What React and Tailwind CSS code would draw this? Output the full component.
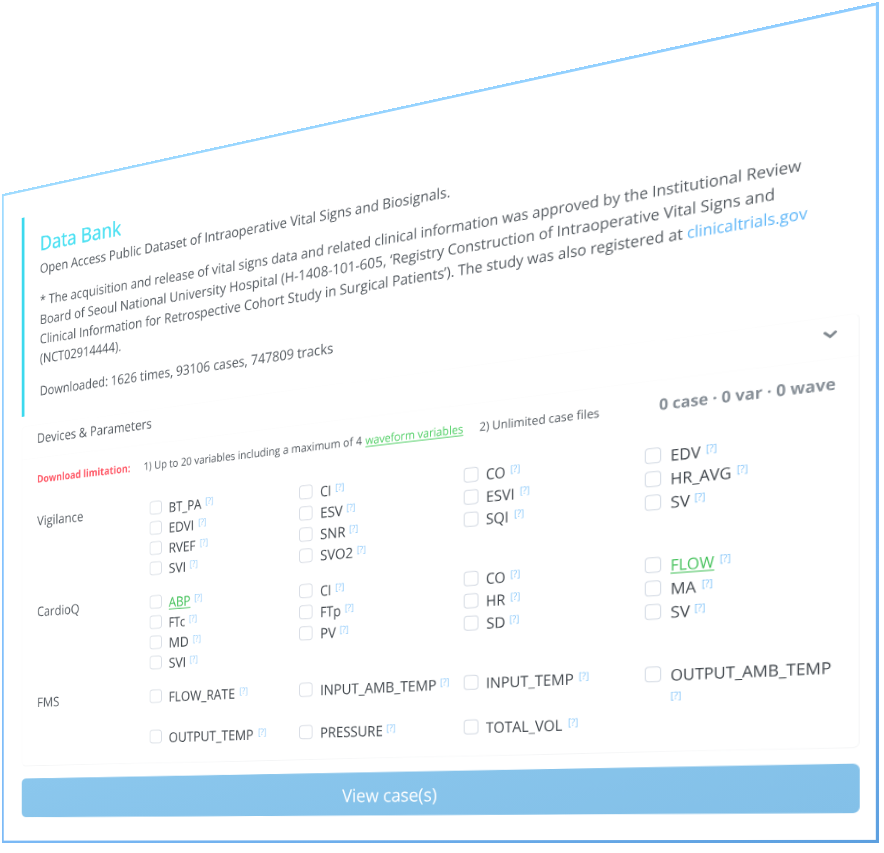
import { useLayoutEffect, useRef, useState } from "react";

// Text squeezed or stretched horizontally to a given width.
function Fit({ w, children, className = "", underline = false }) {
  const ref = useRef(null);
  const [scale, setScale] = useState(1);
  useLayoutEffect(() => {
    const measure = () => {
      if (ref.current) setScale(w / ref.current.offsetWidth);
    };
    measure();
    if (document.fonts) document.fonts.ready.then(measure);
  }, [w]);
  return (
    <span className={`inline-block whitespace-nowrap ${className}`} style={{ width: w }}>
      <span
        ref={ref}
        className={`inline-block origin-left ${underline ? "underline decoration-[1.3px] underline-offset-2" : ""}`}
        style={{ transform: `scaleX(${scale})` }}
      >
        {children}
      </span>
    </span>
  );
}

const groups = [
  {
    name: "Vigilance",
    w: 65,
    columns: [
      [["BT_PA", 42], ["EDVI", 33], ["RVEF", 35], ["SVI", 22.7]],
      [["CI", 13.6], ["ESV", 26.5], ["SNR", 30], ["SVO2", 38.7]],
      [["CO", 21.3], ["ESVI", 31], ["SQI", 24.5]],
      [["EDV", 28.8], ["HR_AVG", 58], ["SV", 18.5]],
    ],
  },
  {
    name: "CardioQ",
    w: 59,
    columns: [
      [["ABP", 28, true], ["FTc", 21.4], ["MD", 26], ["SVI", 22.7]],
      [["CI", 13.6], ["FTp", 24.5], ["PV", 18.5]],
      [["CO", 21.3], ["HR", 20.8], ["SD", 20]],
      [["FLOW", 42, true], ["MA", 25], ["SV", 18.5]],
    ],
  },
  {
    name: "FMS",
    w: 31,
    tall: true,
    columns: [
      [["FLOW_RATE", 84.8], ["OUTPUT_TEMP", 107.8]],
      [["INPUT_AMB_TEMP", 133], ["PRESSURE", 72.7]],
      [["INPUT_TEMP", 91.6], ["TOTAL_VOL", 80.4]],
      [["OUTPUT_AMB_TEMP", 149.5]],
    ],
  },
];

const boxTone = ["border-[#dadfe6]", "border-[#d7dce4]", "border-[#d3d9e2]", "border-[#d3dae4]"];
const hintTone = ["text-[#8fcafa]", "text-[#84c5fa]", "text-[#7cc2f9]", "text-[#79bff8]"];

function Option({ label, w, wave, tall, col }) {
  return (
    <div className={`flex ${tall ? "h-12" : "h-6"}`}>
      <span className={`mt-[2.5px] mr-[8.6px] size-4 shrink-0 rounded-[4px] border-[1.3px] bg-white ${boxTone[col]}`} />
      <div className="-mt-[0.5px] w-[160px] shrink-0 text-base leading-6 text-[#3f454b]">
        <Fit w={w} underline={wave} className={`mr-[4.8px] ${wave ? "text-[#40c057]" : ""}`}>
          {label}
        </Fit>
        <span className={`relative -top-[4.5px] inline-block align-baseline text-[10.5px] leading-none ${hintTone[col]}`}>
          <Fit w={10}>[?]</Fit>
        </span>
      </div>
    </div>
  );
}

export default function App() {
  return (
    <div className="h-[853px] w-[884px] overflow-hidden bg-white font-['Open_Sans','Noto_Sans',sans-serif]">
      <div className="h-[810.5px] w-[984px] origin-top-left bg-linear-[165deg,#a0dcff_0%,#84c3ff_40%,#7cbaf6_75%,#5c9fdf_100%] p-[3px] [transform:matrix3d(0.687535,-0.19603,0,-0.00023254,0,0.8,0,0,0,0,1,0,1.6,194.2,0,1)]">
        <div className="h-full bg-white">
          <div className="ml-[25.7px] flex w-[938px] origin-top-left flex-col pt-[32.2px] text-base leading-6 text-[#565c62] [transform:skewY(0.18deg)]">
            <section className="h-[246.5px] border-l-4 border-[#3bd9ee] pt-5 pl-[21.8px]">
              <h1 className="text-2xl leading-8 text-[#4be0f2] [-webkit-text-stroke:0.35px_#4be0f2]">
                <Fit w={112}>Data Bank</Fit>
              </h1>
              <div className="mt-[3px] h-6">
                <Fit w={511.5}>Open Access Public Dataset of Intraoperative Vital Signs and Biosignals.</Fit>
              </div>
              <div className="mt-[15px] h-6">
                <Fit w={860.5}>
                  * The acquisition and release of vital signs data and related clinical information was approved by the
                  Institutional Review
                </Fit>
              </div>
              <div className="h-6">
                <Fit w={836.5}>
                  Board of Seoul National University Hospital (H-1408-101-605, ‘Registry Construction of Intraoperative
                  Vital Signs and
                </Fit>
              </div>
              <div className="h-6">
                <Fit w={749.5}>
                  Clinical Information for Retrospective Cohort Study in Surgical Patients’). The study was also
                  registered at
                </Fit>
                <Fit w={112} className="ml-[5px] text-[#5eb6f8]">
                  clinicaltrials.gov
                </Fit>
              </div>
              <div className="h-6">
                <Fit w={112.5}>(NCT02914444).</Fit>
              </div>
              <div className="mt-4 h-6">
                <Fit w={378.5}>Downloaded: 1626 times, 93106 cases, 747809 tracks</Fit>
              </div>
            </section>

            <section className="mt-[12.5px] h-[422px] rounded-md border border-t-[#fdfdfd] border-r-[#f5f6f7] border-b-[#f4f5f6] border-l-[#fbfbfc]">
              <header className="flex h-[41px] items-start justify-between border-b border-[#fdfdfd] pt-[4px] pr-[19.5px] pl-[21px]">
                <Fit w={156.5}>Devices &amp; Parameters</Fit>
                <svg viewBox="0 0 12 8" className="mt-[8.5px] h-[8px] w-[12px]" fill="none" stroke="#7f878e" strokeWidth="2.5">
                  <path d="M1.3 1.6 6 5.8l4.7-4.2" strokeLinecap="round" />
                </svg>
              </header>
              <div className="flex h-6 items-baseline pt-[11.5px] pl-[21px] text-[12.8px]">
                <Fit w={128.7} className="mr-[17.5px] font-bold text-[#ff5b69]">
                  Download limitation:
                </Fit>
                <Fit w={269.5} className="mr-[4.5px]">
                  1) Up to 20 variables including a maximum of 4
                </Fit>
                <Fit w={109} underline className="mr-[17.5px] text-[#51cf66]">
                  waveform variables
                </Fit>
                <Fit w={125}>2) Unlimited case files</Fit>
                <Fit w={164} className="ml-[59.5px] text-base font-bold text-[#868e96]">
                  0 case · 0 var · 0 wave
                </Fit>
              </div>
              <div className="flex flex-col gap-4 pt-[41px] pl-[21px]">
                {groups.map((g) => (
                  <div key={g.name} className="flex h-24">
                    <div className="w-[154.4px] shrink-0">
                      <Fit w={g.w}>{g.name}</Fit>
                    </div>
                    {g.columns.map((col, i) => (
                      <div key={i} className="w-[187.7px] shrink-0">
                        {col.map(([label, w, wave]) => (
                          <Option key={label} label={label} w={w} wave={wave} tall={g.tall} col={i} />
                        ))}
                      </div>
                    ))}
                  </div>
                ))}
              </div>
            </section>

            <button className="mt-[15px] h-[48px] rounded-md bg-linear-[170deg,#8bc7ed,#83c0e8] pt-[3px] text-xl text-white">
              <Fit w={108}>View case(s)</Fit>
            </button>
          </div>
        </div>
      </div>
    </div>
  );
}
